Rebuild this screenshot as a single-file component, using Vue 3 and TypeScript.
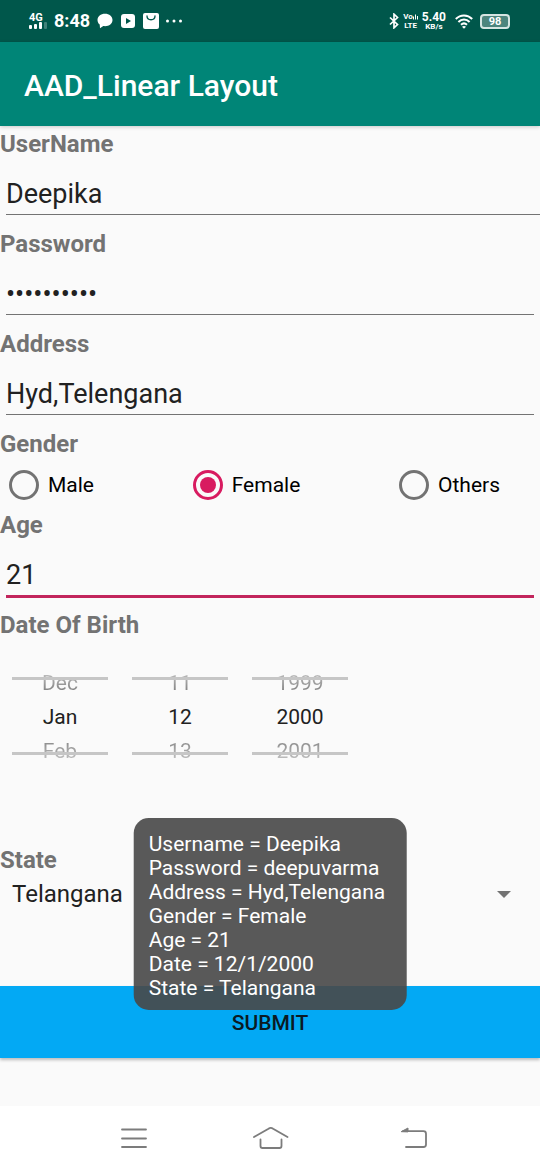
<script setup lang="ts">
import { computed, ref } from 'vue'

const months = ['Jan', 'Feb', 'Mar', 'Apr', 'May', 'Jun', 'Jul', 'Aug', 'Sep', 'Oct', 'Nov', 'Dec']
const states = ['Telangana', 'Andhra Pradesh', 'Karnataka', 'Tamil Nadu']
const genders = ['Male', 'Female', 'Others']

const username = ref('Deepika')
const password = ref('deepuvarma')
const address = ref('Hyd,Telengana')
const gender = ref('Female')
const age = ref('21')
const month = ref(0)
const day = ref(12)
const year = ref(2000)
const state = ref('Telangana')

const wrapDay = (d: number) => ((d - 1 + 31) % 31) + 1
const wrapMonth = (m: number) => (m + 12) % 12

const columns = computed(() => [
  {
    name: 'Month',
    prev: months[wrapMonth(month.value - 1)],
    value: months[month.value],
    next: months[wrapMonth(month.value + 1)],
    step: (n: number) => { month.value = wrapMonth(month.value + n) },
  },
  {
    name: 'Day',
    prev: wrapDay(day.value - 1),
    value: day.value,
    next: wrapDay(day.value + 1),
    step: (n: number) => { day.value = wrapDay(day.value + n) },
  },
  {
    name: 'Year',
    prev: year.value - 1,
    value: year.value,
    next: year.value + 1,
    step: (n: number) => { year.value += n },
  },
])

const summarize = () => [
  `Username = ${username.value}`,
  `Password = ${password.value}`,
  `Address = ${address.value}`,
  `Gender = ${gender.value}`,
  `Age = ${age.value}`,
  `Date = ${day.value}/${month.value + 1}/${year.value}`,
  `State = ${state.value}`,
]
const toast = ref<string[]>(summarize())
const submit = () => { toast.value = summarize() }
</script>

<template>
  <div class="screen">
    <div class="status">
      <div class="status-side">
        <div class="signal">
          <span class="network">4G</span>
          <svg width="18" height="7" viewBox="0 0 18 7" fill="#fff">
            <rect x="0" y="3" width="3" height="4" rx="1" />
            <rect x="5" y="2" width="3" height="5" rx="1" />
            <rect x="10" y="0" width="3" height="7" rx="1" />
            <rect x="15" y="0" width="3" height="7" rx="1" opacity=".25" />
          </svg>
        </div>
        <span class="clock">8:48</span>
        <svg width="16" height="16" viewBox="0 0 16 16" fill="#fff">
          <path d="M8 .8c4.300 0 7.500 2.700 7.500 6.200S12.300 13.200 8 13.200c-.6 0-1.200 0-1.700-.1L3 15.300l-.3-3.700C1.300 10.400.5 8.800.5 7 .5 3.500 3.700.8 8 .8z" />
        </svg>
        <svg width="16" height="16" viewBox="0 0 16 16">
          <rect x="1" y="1" width="14" height="14" rx="3" fill="#fff" />
          <path d="M6 5l5 3-5 3z" fill="#00574b" />
        </svg>
        <svg width="16" height="16" viewBox="0 0 16 16">
          <rect x="0" y="0" width="16" height="16" rx="2" fill="#fff" />
          <path d="M4 3c0 5 8 5 8 0" fill="none" stroke="#00574b" stroke-width="1.300" stroke-linecap="round" />
        </svg>
        <svg width="16" height="16" viewBox="0 0 16 16" fill="#fff">
          <circle cx="1.500" cy="8" r="1.500" /><circle cx="8" cy="8" r="1.500" /><circle cx="14.500" cy="8" r="1.500" />
        </svg>
      </div>
      <div class="status-side right">
        <svg width="10" height="16" viewBox="0 0 10 16" fill="none" stroke="#fff" stroke-width="1.700">
          <path d="M1 4.500l7.500 7L5 14.800V1.200l3.500 3.300L1 11.500" />
        </svg>
        <div class="stack volte">
          <span class="mini">Vo<svg width="5" height="6" viewBox="0 0 5 6" fill="none" stroke="#fff"><path d="M.5 5.500v-3M2.500 5.500v-5M4.500 5.500V2" /></svg></span>
          <span class="mini">LTE</span>
        </div>
        <div class="stack">
          <span class="rate">5.40</span>
          <span class="mini">KB/s</span>
        </div>
        <svg class="wifi" width="18" height="15" viewBox="0 0 18 15" fill="none" stroke="#fff" stroke-width="2">
          <path d="M.8 5C5.500.3 12.500.3 17.200 5M3.400 8c3.300-3.300 7.900-3.300 11.200 0M6 10.800c1.800-1.700 4.200-1.700 6 0" />
          <path d="M7 12.700c1.200-.9 2.800-.9 4 0L9 14.800z" fill="#fff" stroke="none" />
        </svg>
        <div class="battery">98</div>
      </div>
    </div>

    <header class="appbar"><h1>AAD_Linear Layout</h1></header>

    <form class="form" @submit.prevent="submit">
      <label class="caption" for="username">UserName</label>
      <div class="field wide"><input id="username" v-model="username" type="text"></div>
      <label class="caption" for="password">Password</label>
      <div class="field"><input id="password" v-model="password" type="password" autocomplete="off"></div>
      <label class="caption" for="address">Address</label>
      <div class="field"><input id="address" v-model="address" type="text"></div>

      <div id="gender-caption" class="caption">Gender</div>
      <div class="radios" role="radiogroup" aria-labelledby="gender-caption">
        <label v-for="g in genders" :key="g" class="radio">
          <input v-model="gender" type="radio" name="gender" :value="g">{{ g }}
        </label>
      </div>

      <label class="caption" for="age">Age</label>
      <div class="field active"><input id="age" v-model="age" type="text" inputmode="numeric"></div>

      <div id="dob-caption" class="caption">Date Of Birth</div>
      <div class="picker" role="group" aria-labelledby="dob-caption">
        <div v-for="c in columns" :key="c.name" class="wheel">
          <button type="button" class="before" @click="c.step(-1)">{{ c.prev }}</button>
          <input type="text" :value="c.value" :aria-label="c.name" readonly>
          <button type="button" class="after" @click="c.step(1)">{{ c.next }}</button>
        </div>
      </div>

      <label class="caption" for="state">State</label>
      <div class="spinner">
        <select id="state" v-model="state">
          <option v-for="s in states" :key="s">{{ s }}</option>
        </select>
        <svg width="14" height="7" viewBox="0 0 14 7"><path d="M0 0h14L7 7z" fill="#737373" /></svg>
      </div>

      <button type="submit" class="submit">SUBMIT</button>
    </form>

    <nav class="nav">
      <button type="button" aria-label="Recent apps">
        <svg width="44" height="24" viewBox="0 0 44 24">
          <path d="M11 3.500h24M11 12.500h24M11 21h24" />
        </svg>
      </button>
      <button type="button" aria-label="Home">
        <svg width="44" height="24" viewBox="0 0 44 24">
          <path d="M6 11L20.500 2.800Q22.800 1 25.100 2.800L39.500 11M12.500 13.500v6.500q0 2 2 2h17q2 0 2-2v-6.500" />
        </svg>
      </button>
      <button type="button" aria-label="Back">
        <svg width="44" height="24" viewBox="0 0 44 24">
          <path d="M18 5.200h20.500q2.500 0 2.500 2.500v10.800q0 2.500-2.500 2.500H21" />
          <path class="solid" d="M16.500 5.500L23 2v3.500z" />
        </svg>
      </button>
    </nav>

    <div v-if="toast.length" class="toast" role="status">
      <div v-for="line in toast" :key="line">{{ line }}</div>
    </div>
  </div>
</template>

<style>
body {
  margin: 0;
  background: #fafafa;
}
</style>

<style scoped>
.screen {
  position: relative;
  display: flex;
  flex-direction: column;
  min-height: 100vh;
  background: #fafafa;
  color: #212121;
  font-family: Roboto, "Liberation Sans", sans-serif;
}
.screen *, .screen {
  box-sizing: border-box;
}
button, input, select {
  margin: 0;
  padding: 0;
  border: 0;
  border-radius: 0;
  background: none;
  color: inherit;
  font: inherit;
  outline: none;
}
svg {
  display: block;
  flex: none;
}
.status {
  display: flex;
  align-items: center;
  justify-content: space-between;
  height: 42px;
  padding: 0 30px 0 29px;
  background: #00574b;
  color: #fff;
}
.status-side {
  display: flex;
  align-items: center;
  gap: 7px;
}
.right {
  gap: 4px;
}
.signal, .stack {
  display: flex;
  flex-direction: column;
  align-items: center;
}
.signal {
  align-items: flex-start;
}
.volte {
  gap: 1px;
}
.network {
  font-size: 11px;
  line-height: 9px;
  font-weight: 700;
}
.rate {
  font-size: 12px;
  line-height: 12px;
  font-weight: 700;
}
.mini {
  display: flex;
  align-items: center;
  font-size: 8px;
  line-height: 8px;
  font-weight: 700;
}
.clock {
  font-size: 18px;
  line-height: 20px;
  font-weight: 700;
}
.wifi {
  margin: 0 3px 0 5px;
}
.battery {
  width: 30px;
  height: 15px;
  border: 2px solid #d5e5e2;
  border-radius: 4px;
  background: #4c857d;
  font-size: 11px;
  line-height: 12px;
  font-weight: 700;
  text-align: center;
}
.appbar {
  display: flex;
  align-items: center;
  height: 84px;
  padding: 4px 24px 0;
  background: #008577;
  color: #fff;
  box-shadow: 0 1px 4px rgba(0, 0, 0, .2);
}
h1 {
  margin: 0;
  font-size: 30px;
  line-height: 36px;
  font-weight: 500;
}
.form {
  display: flex;
  flex: 1;
  flex-direction: column;
  padding-top: 1px;
}
.caption {
  height: 32px;
  color: #737373;
  font-size: 24px;
  line-height: 34px;
  font-weight: 700;
}
.field {
  height: 68px;
  padding: 12px 6px;
}
.field.wide {
  padding-right: 0;
}
.field input {
  display: block;
  width: 100%;
  height: 44px;
  padding-top: 3px;
  border-bottom: 1px solid #737373;
  font-size: 27px;
}
.field.active input {
  height: 46px;
  border-bottom: 3px solid #c2255c;
}
.radios {
  display: flex;
  align-items: center;
  justify-content: space-between;
  height: 49px;
  padding: 2px 40px 0 9px;
}
.radio {
  display: flex;
  align-items: center;
  gap: 9px;
  color: #000;
  font-size: 21px;
  line-height: 30px;
}
.radio input {
  appearance: none;
  display: grid;
  place-items: center;
  width: 30px;
  height: 30px;
  border: 3px solid #737373;
  border-radius: 50%;
}
.radio input:checked {
  border-color: #d81b60;
}
.radio input:checked::before {
  content: "";
  width: 16px;
  height: 16px;
  border-radius: 50%;
  background: #d81b60;
}
.picker {
  display: flex;
  align-items: center;
  gap: 24px;
  height: 203px;
  padding: 0 12px 49px;
}
.wheel {
  position: relative;
  display: grid;
  grid-template-rows: repeat(3, 34px);
  width: 96px;
  font-size: 21px;
}
.wheel::before, .wheel::after {
  content: "";
  position: absolute;
  left: 0;
  right: 0;
  height: 3px;
  background: #c6c6c6;
}
.wheel::before {
  top: 11px;
}
.wheel::after {
  bottom: 13px;
}
.wheel input {
  width: 100%;
  text-align: center;
}
.before, .after {
  color: transparent;
  background-clip: text;
}
.before {
  background-image: linear-gradient(#c0c0c0 20%, #707070 90%);
}
.after {
  background-image: linear-gradient(#808080 10%, #c4c4c4 80%);
}
.spinner {
  display: flex;
  align-items: center;
  position: relative;
  height: 38px;
  margin-bottom: 73px;
}
.spinner select {
  appearance: none;
  width: 100%;
  height: 100%;
  padding: 0 48px 0 12px;
  font-size: 24px;
}
.spinner svg {
  position: absolute;
  right: 29px;
  pointer-events: none;
}
.submit {
  height: 72px;
  margin-bottom: 48px;
  padding-top: 2px;
  background: #03a9f4;
  color: #0b1a22;
  font-size: 21px;
  font-weight: 500;
  box-shadow: 0 2px 3px rgba(0, 0, 0, .25);
}
.nav {
  display: grid;
  grid-template-columns: repeat(3, 1fr);
  align-items: center;
  justify-items: center;
  height: 64px;
  padding: 0 12%;
  background: #fff;
}
.nav path {
  fill: none;
  stroke: #7c7c7c;
  stroke-width: 1.800;
  stroke-linecap: round;
}
.nav .solid {
  fill: #7c7c7c;
  stroke-width: 1;
}
.toast {
  position: absolute;
  left: 50%;
  bottom: 160px;
  transform: translateX(-50%);
  padding: 14px 21px 10px 15px;
  border-radius: 15px;
  background: rgba(73, 73, 73, .91);
  color: #fff;
  font-size: 21px;
  line-height: 24px;
  white-space: nowrap;
}
</style>
